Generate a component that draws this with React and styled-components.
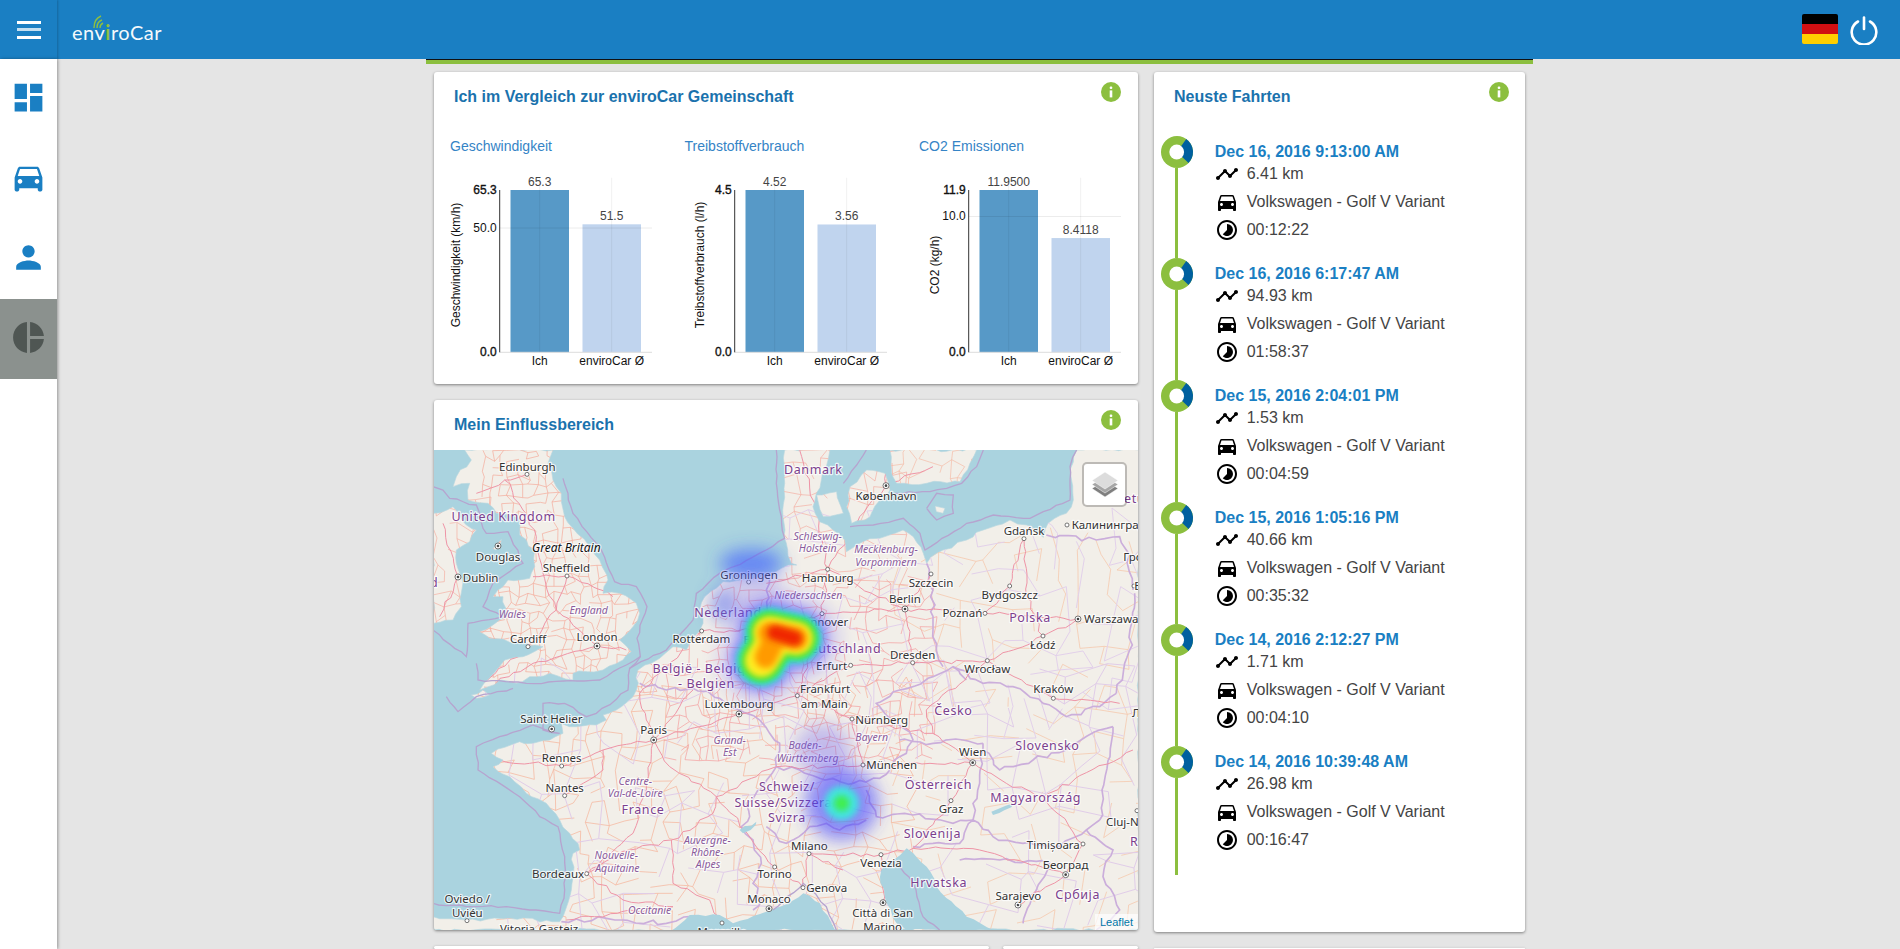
import React from 'react';
import styled, { createGlobalStyle } from 'styled-components';
import { MdDashboard, MdDirectionsCar, MdPerson, MdPieChart, MdTimeline, MdTimelapse } from 'react-icons/md';

const GlobalStyle = createGlobalStyle`
  html, body {
    margin: 0;
    height: 949px;
    overflow: hidden;
    background: #e5e5e5;
    font-family: "Liberation Sans", Arial, sans-serif;
  }
`;

const Page = styled.div`
  display: flex;
  flex-direction: column;
  height: 949px;
  overflow: hidden;
`;

const Header = styled.header`
  display: flex;
  align-items: center;
  height: 59px;
  flex: none;
  background: #1a7fc3;
`;

const BurgerCell = styled.div`
  display: flex;
  flex-direction: column;
  justify-content: center;
  gap: 4.5px;
  width: 57px;
  height: 59px;
  padding: 0 16px 0 17px;
  box-sizing: border-box;
  box-shadow: 1px 0 2px rgba(0, 0, 0, 0.2);
`;

const BurgerBar = styled.span`
  display: block;
  height: 3px;
  background: #fff;
  opacity: ${p => (p.$faded ? 0.75 : 1)};
`;

const Logo = styled.div`
  position: relative;
  margin: 5px 0 0 15px;
  font-family: Lato, sans-serif;
  font-weight: 400;
  font-size: 20px;
  letter-spacing: 0.5px;
  color: #f4f9fc;
`;

const LogoI = styled.span`
  color: #8fbf3f;
  font-weight: 700;
`;

const LogoWaves = styled.svg`
  position: absolute;
  left: 20px;
  top: -5px;
`;

const HeaderRight = styled.div`
  display: flex;
  align-items: center;
  margin-left: auto;
  padding-right: 21px;
  gap: 11px;
`;

const Flag = styled.div`
  width: 36px;
  height: 30px;
  border-radius: 2px;
  margin-top: -1px;
  background: linear-gradient(#000 0 33.3%, #d00f12 33.3% 66.6%, #ffce00 66.6%);
`;

const Body = styled.div`
  display: flex;
  flex: 1;
  min-height: 0;
`;

const Sidebar = styled.nav`
  width: 57px;
  flex: none;
  background: #fff;
  box-shadow: 1px 0 3px rgba(0, 0, 0, 0.35);
  z-index: 1;
`;

const NavItem = styled.div`
  display: flex;
  align-items: center;
  justify-content: center;
  height: 80px;
  padding-bottom: 3px;
  box-sizing: border-box;
  font-size: 37px;
  color: ${p => (p.$active ? '#4f5653' : '#1a7fc3')};
  background: ${p => (p.$active ? '#8b918e' : 'transparent')};
`;

const Main = styled.main`
  flex: 1;
  display: flex;
  justify-content: center;
  min-width: 0;
  padding-left: 2px;
`;

const Container = styled.div`
  width: 1107px;
`;

const Strip = styled.div`
  height: 4px;
  background: #8cbf3f;
  border-top: 1px solid #111;
`;

const Columns = styled.div`
  display: grid;
  grid-template-columns: 704px 371px;
  column-gap: 16px;
  padding: 8px 8px 0 8px;
`;

const Stack = styled.div`
  display: flex;
  flex-direction: column;
  gap: 16px;
`;

const Card = styled.section`
  position: relative;
  background: #fff;
  border-radius: 3px;
  box-shadow: 0 1px 3px rgba(0, 0, 0, 0.45);
  height: ${p => p.$height}px;
  flex: ${p => p.$grow || 'none'};
`;

const CardRow = styled.div`
  display: flex;
  gap: 14px;
`;

const CardTitle = styled.h2`
  margin: 0;
  padding: 2px 0 0 ${p => p.$left || 20}px;
  font-size: 16px;
  font-weight: 700;
  line-height: 46px;
  color: #1a72ad;
`;

const InfoBadge = styled.svg`
  position: absolute;
  top: 10px;
  right: ${p => p.$right}px;
`;

const ChartGrid = styled.div`
  display: grid;
  grid-template-columns: 234.5px 234.5px 1fr;
  padding-left: 16px;
`;

const ChartTitle = styled.div`
  margin-top: 18px;
  font-size: 14px;
  line-height: 16px;
  color: #3584c6;
`;

const ChartSvg = styled.svg`
  display: block;
  margin-top: 16px;
  overflow: visible;
`;

const AxisText = styled.text`
  font-size: 12px;
  fill: ${p => p.$fill || '#111'};
  text-anchor: ${p => p.$anchor || 'middle'};
  stroke: ${p => (p.$bold ? '#111' : 'none')};
  stroke-width: 0.35px;
`;

const MapArea = styled.div`
  position: relative;
  height: 480px;
  margin-top: 2px;
  overflow: hidden;
  background: #aad3df;
  border-radius: 0 0 3px 3px;
`;

const MapSvg = styled.svg`
  display: block;
`;

const LayerButton = styled.div`
  position: absolute;
  top: 12px;
  right: 11px;
  display: flex;
  align-items: center;
  justify-content: center;
  width: 41px;
  height: 41px;
  background: #fff;
  border: 2px solid rgba(0, 0, 0, 0.22);
  border-radius: 5px;
  background-clip: padding-box;
`;

const Attribution = styled.div`
  position: absolute;
  right: 0;
  bottom: 0;
  padding: 0 5px;
  font-size: 11px;
  line-height: 16px;
  color: #0078a8;
  background: rgba(255, 255, 255, 0.7);
`;

const MapText = styled.text`
  font-family: "Noto Sans", "Open Sans", sans-serif;
  text-anchor: ${p => p.$anchor || 'middle'};
  paint-order: stroke;
  stroke: rgba(255, 255, 255, 0.75);
  stroke-width: 2.4px;
  stroke-linejoin: round;
  ${p => ({
    city: 'font-size: 11.5px; fill: #333;',
    country: 'font-size: 12.5px; fill: #7b3f8e; letter-spacing: 0.6px;',
    state: 'font-size: 10.5px; fill: #8a5c9c; font-style: italic;',
    island: 'font-size: 12px; fill: #111; font-style: italic;',
  }[p.$kind])}
`;

const Timeline = styled.div`
  padding: 15.7px 0 0 7px;
`;

const TripItem = styled.div`
  display: flex;
  gap: 21.7px;
  height: 122.1px;
  &:last-child {
    height: 129px;
  }
`;

const MarkerColumn = styled.div`
  display: flex;
  flex-direction: column;
  align-items: center;
  width: 32px;
  flex: none;
`;

const TrackLine = styled.div`
  flex: 1;
  width: 3px;
  margin-right: 1px;
  background: #8cbf3f;
`;

const TripBody = styled.div`
  padding-top: 6.2px;
`;

const TripDate = styled.div`
  font-size: 16px;
  font-weight: 700;
  line-height: 20px;
  color: #1a7fc3;
`;

const TripRow = styled.div`
  display: flex;
  align-items: center;
  gap: 8px;
  height: 24px;
  margin-bottom: 4px;
  font-size: 16px;
  color: #444;
  svg {
    font-size: 24px;
    color: #000;
    flex: none;
  }
`;

// small seeded random so the map comes out the same on every load
function seeded(seed) {
  let s = seed;
  return () => {
    s = (s + 0x6d2b79f5) | 0;
    let t = Math.imul(s ^ (s >>> 15), 1 | s);
    t = (t + Math.imul(t ^ (t >>> 7), 61 | t)) ^ t;
    return ((t ^ (t >>> 14)) >>> 0) / 4294967296;
  };
}

// breaks straight segments into small kinks so lines look like traced geography
function wobble(pts, amount, seed, closed) {
  const rnd = seeded(seed);
  const out = [];
  const n = pts.length / 2;
  const last = closed ? n : n - 1;
  for (let i = 0; i < last; i++) {
    const x0 = pts[i * 2];
    const y0 = pts[i * 2 + 1];
    const x1 = pts[((i + 1) % n) * 2];
    const y1 = pts[((i + 1) % n) * 2 + 1];
    const len = Math.hypot(x1 - x0, y1 - y0);
    const parts = Math.max(1, Math.round(len / 22));
    for (let k = 0; k < parts; k++) {
      const t = k / parts;
      const j = k === 0 ? 0 : amount;
      out.push(
        Math.round(x0 + (x1 - x0) * t + (rnd() - 0.5) * j * 2),
        Math.round(y0 + (y1 - y0) * t + (rnd() - 0.5) * j * 2),
      );
    }
  }
  if (!closed) out.push(pts[n * 2 - 2], pts[n * 2 - 1]);
  return out.join(' ');
}

const parsePts = str => str.split(/[ ,]+/).map(Number);

// map drawing, all shapes in 3x map pixels
const LAND = [
  '0,1400 100,1410 230,1405 380,1415 390,1400 415,1320 420,1210 440,1200 410,1150 380,1110 340,1060 280,1030 230,980 180,950 210,930 175,910 260,875 300,880 350,870 390,850 385,820 430,830 490,825 520,810 510,795 550,780 600,740 610,720 615,660 680,625 720,590 760,600 810,520 800,480 815,440 870,395 950,390 1010,370 1045,355 1091,345 1075,340 1060,280 1050,200 1055,100 1055,0 1191,0 1180,50 1165,90 1150,130 1140,170 1160,215 1200,240 1235,270 1240,305 1290,275 1340,265 1410,240 1441,260 1471,310 1481,340 1511,310 1601,270 1651,240 1731,210 1781,225 1831,262 1845,220 1900,190 1921,150 1911,60 1931,0 2118,0 2118,1440 0,1440',
  '95,0 115,30 70,80 60,110 110,100 105,150 165,160 190,190 260,205 260,255 305,300 305,350 290,385 225,390 180,440 210,440 220,500 140,545 170,565 250,575 330,590 270,620 215,630 140,720 200,690 250,700 290,680 350,670 420,690 420,670 510,660 570,630 595,605 560,570 600,530 620,490 610,460 560,430 510,430 525,390 500,330 470,290 420,235 395,200 385,130 360,90 345,40 360,0',
  '0,190 60,170 100,225 130,240 110,275 70,300 70,340 85,380 85,470 60,510 0,520',
  '180,296 205,268 203,285 188,300',
  '1371,0 1376,70 1391,100 1481,100 1581,95 1611,40 1631,0',
  '1251,110 1301,60 1356,70 1371,120 1341,150 1311,200 1256,220 1241,170',
  '1151,135 1211,125 1231,190 1171,200',
  '1506,168 1536,175 1530,190 1510,185',
  '115,735 150,720 170,735 130,745',
].map((p, i) => wobble(parsePts(p), 5, 100 + i, true));

const SEAS = [
  '720,1440 770,1395 860,1395 900,1420 1000,1385 1041,1370 1111,1330 1161,1360 1206,1440',
  '1341,1280 1345,1260 1381,1230 1421,1195 1441,1210 1481,1250 1511,1310 1601,1400 1681,1440 1421,1440 1391,1420 1361,1360',
  '1675,1085 1741,1060 1735,1072 1680,1095',
  '920,1140 970,1115 968,1125 930,1150',
].map((p, i) => wobble(parsePts(p), 4, 200 + i, true));

const ROADS = [
  [282, 73, 215, 90, 270, 180, 310, 260, 330, 370, 370, 480, 492, 588, 580, 600],
  [215, 90, 130, 130], [370, 480, 285, 590, 150, 700], [492, 588, 300, 640, 150, 720],
  [402, 378, 370, 480], [300, 380, 402, 378, 540, 440], [75, 381, 30, 220], [75, 381, 20, 500],
  [662, 870, 918, 792], [662, 870, 780, 720], [662, 870, 620, 730], [662, 870, 510, 900, 386, 948, 200, 930],
  [510, 900, 510, 960, 395, 1037], [662, 870, 640, 1000, 600, 1150, 461, 1271],
  [662, 870, 710, 950, 850, 1040, 840, 1090, 715, 1170, 720, 1300, 830, 1350, 867, 1419],
  [715, 1170, 590, 1200, 461, 1271, 570, 1350, 720, 1370, 400, 1410],
  [850, 1040, 1025, 1251, 1110, 1313, 1128, 1211, 1344, 1214, 1350, 1358],
  [1128, 1211, 1230, 1260], [918, 792, 1093, 737, 1257, 807, 1290, 945, 1180, 950, 1030, 950, 850, 1040],
  [1093, 737, 1253, 646, 1439, 638, 1663, 632, 1830, 558, 1935, 507, 1656, 490, 1416, 477, 1167, 491, 1184, 358, 1150, 180, 1100, 0],
  [1167, 491, 1093, 737], [1167, 491, 1000, 540, 806, 543, 620, 730], [1416, 477, 1494, 372], [1416, 477, 1439, 638],
  [1184, 358, 1416, 477], [1184, 358, 1000, 400], [1290, 945, 1619, 938, 1554, 1052, 1440, 1195, 1344, 1214],
  [1619, 938, 1720, 1000, 1830, 1040, 1950, 1182, 1898, 1274, 1755, 1365], [1898, 1274, 1640, 1200, 1440, 1195],
  [1830, 1040, 2100, 900], [1619, 938, 1500, 850, 1257, 807], [1500, 850, 1480, 780, 1663, 632],
  [1861, 745, 1663, 632], [1861, 745, 2060, 760], [1773, 266, 1780, 440, 1830, 558], [1656, 490, 1730, 408, 1773, 266],
  [1359, 107, 1280, 200, 1184, 358], [1359, 107, 1500, 50], [1359, 107, 1370, 0],
].map((r, i) => wobble(r, 6, 300 + i));

const BORDERS = [
  [620, 700, 700, 720, 780, 715, 860, 745, 920, 780, 980, 810, 1010, 850, 1040, 880, 1030, 950, 990, 1010, 940, 1060, 950, 1100, 925, 1130, 960, 1170, 985, 1240, 960, 1300, 985, 1350, 960, 1380],
  [1010, 370, 1000, 420, 1010, 500, 960, 530, 945, 620, 900, 660],
  [1030, 950, 1100, 960, 1160, 985, 1260, 1000, 1340, 985, 1400, 920, 1440, 870, 1390, 820, 1330, 760, 1400, 720, 1500, 680, 1560, 650, 1600, 690],
  [1481, 340, 1500, 420, 1500, 520, 1510, 600, 1530, 650], [1560, 650, 1650, 700, 1740, 710, 1830, 760],
  [1830, 760, 1900, 800, 2000, 770, 2050, 730], [1840, 255, 1990, 270, 2060, 260, 2080, 300, 2100, 420],
  [1400, 870, 1500, 880, 1590, 870, 1650, 880], [1650, 900, 1700, 960, 1800, 930, 1900, 900, 2000, 840, 2040, 830],
  [1650, 880, 1650, 900, 1640, 1000, 1620, 1060, 1620, 1110], [1300, 1020, 1330, 1100, 1440, 1095, 1560, 1120, 1620, 1110],
  [1000, 1130, 1060, 1180, 1130, 1130, 1180, 1120, 1220, 1140, 1300, 1110],
  [1440, 1190, 1500, 1180, 1580, 1180, 1620, 1110, 1680, 1160, 1770, 1180, 1850, 1190],
  [1580, 1230, 1700, 1230, 1850, 1240, 1810, 1320, 1770, 1420], [2000, 1110, 1960, 1140, 1880, 1190, 1850, 1190],
  [1960, 1140, 2040, 1200, 2010, 1280, 2060, 1380, 1990, 1440], [385, 1415, 520, 1405, 700, 1420, 770, 1400],
  [2040, 830, 2000, 1110], [2050, 730, 2090, 600, 2105, 430],
].map((b, i) => wobble(b, 7, 500 + i));

const SEA_BORDERS = [
  [390, 85, 420, 190, 505, 300, 545, 395, 610, 410, 642, 470, 612, 565, 622, 620, 590, 655, 585, 720, 490, 790, 460, 800, 395, 760, 330, 760, 330, 840, 380, 850, 300, 825, 200, 860, 130, 890, 135, 960, 260, 1040, 320, 1100, 375, 1130, 395, 1220, 395, 1320, 380, 1390, 220, 1370, 100, 1370, 0, 1360],
  [622, 620, 500, 690, 280, 700, 135, 690, 130, 640],
  [40, 740, 75, 785, 130, 740, 240, 715],
  [0, 110, 30, 120, 50, 145, 130, 165, 150, 235, 160, 250, 225, 245, 270, 340, 230, 365, 180, 400, 150, 470, 210, 500, 105, 520, 100, 620, 0, 540],
  [590, 655, 700, 600, 780, 510, 790, 430, 860, 370, 1000, 300, 1055, 265, 1040, 180, 1030, 100, 1030, 0],
  [1251, 230, 1321, 225, 1411, 205, 1461, 250, 1476, 300, 1601, 220, 1681, 195, 1791, 205, 1831, 185, 1911, 150, 1911, 50, 1931, 0],
  [1231, 100, 1281, 30, 1300, 0], [1386, 130, 1491, 125, 1586, 100, 1631, 50, 1651, 0],
  [1481, 175, 1511, 130, 1561, 135, 1561, 190, 1511, 210, 1481, 175],
  [1400, 1250, 1440, 1300, 1470, 1400, 1520, 1440], [1020, 1380, 1111, 1300, 1180, 1370, 1210, 1440],
];

function mesh(x0, y0, x1, y1, step, keep, seed) {
  const rnd = seeded(seed);
  const nx = Math.ceil((x1 - x0) / step);
  const ny = Math.ceil((y1 - y0) / step);
  const pts = [];
  for (let j = 0; j <= ny; j++) {
    const row = [];
    for (let i = 0; i <= nx; i++) {
      row.push([x0 + i * step + (rnd() - 0.5) * step * 0.85, y0 + j * step + (rnd() - 0.5) * step * 0.85]);
    }
    pts.push(row);
  }
  const seg = (a, b) => `M${a[0].toFixed(0)},${a[1].toFixed(0)}L${b[0].toFixed(0)},${b[1].toFixed(0)}`;
  let d = '';
  for (let j = 0; j <= ny; j++) {
    for (let i = 0; i <= nx; i++) {
      if (i < nx && rnd() < keep) d += seg(pts[j][i], pts[j][i + 1]);
      if (j < ny && rnd() < keep) d += seg(pts[j][i], pts[j + 1][i]);
    }
  }
  return d;
}

const MESHES = [
  { d: mesh(150, 0, 640, 720, 27, 0.72, 11), color: '#f4a897', w: 2 },
  { d: mesh(0, 150, 140, 520, 40, 0.65, 5), color: '#f4ada0', w: 2 },
  { d: mesh(150, 700, 1400, 1440, 46, 0.56, 21), color: '#f5b59c', w: 2.2 },
  { d: mesh(700, 380, 1500, 900, 32, 0.62, 31), color: '#f4a2a2', w: 2.2 },
  { d: mesh(1050, 0, 1400, 400, 40, 0.55, 41), color: '#f4aca0', w: 2 },
  { d: mesh(1400, 250, 2118, 1440, 68, 0.42, 51), color: '#f6c6a8', w: 2.2 },
  { d: mesh(1360, 0, 1640, 100, 38, 0.5, 61), color: '#f5b9a5', w: 2 },
  { d: mesh(150, 650, 2118, 1440, 88, 0.5, 71), color: '#e0cce8', w: 3 },
  { d: mesh(1000, 200, 2118, 800, 80, 0.5, 81), color: '#e2d0ea', w: 3 },
];

const CITY_DOTS = [
  [282, 73], [195, 288, 1], [75, 381, 1], [402, 378], [285, 590], [492, 588, 1], [806, 543], [947, 396], [1184, 358],
  [1167, 491], [1416, 477, 1], [1494, 372], [1359, 107, 1], [1773, 266], [1902, 225], [1730, 408], [1656, 490],
  [1935, 507, 1], [1830, 558], [1439, 638], [1663, 632], [1253, 646], [1093, 737], [918, 792, 1], [356, 837, 1],
  [662, 870, 1], [386, 948], [395, 1037], [461, 1271], [102, 1412], [1025, 1251], [1008, 1376, 1], [867, 1419],
  [1257, 807], [1290, 945], [1619, 938, 1], [1554, 1052], [1128, 1211], [1344, 1214], [1110, 1313], [1350, 1358, 1],
  [1755, 1365, 1], [1898, 1274, 1], [1950, 1182], [2112, 1082], [1861, 745], [2103, 408],
];

const LABELS = [
  ['city', 'Edinburgh', 283, 52], ['city', 'Douglas', 195, 322], ['city', 'Dublin', 143, 383], ['city', 'Sheffield', 400, 355],
  ['city', 'Cardiff', 285, 568], ['city', 'London', 492, 560], ['city', 'Rotterdam', 805, 568], ['city', 'Groningen', 948, 374],
  ['city', 'Essen', 978, 570], ['city', 'Hamburg', 1184, 385], ['city', 'Hannover', 1166, 515], ['city', 'Berlin', 1416, 447],
  ['city', 'Szczecin', 1494, 398], ['city', 'København', 1359, 138], ['city', 'Gdańsk', 1773, 243], ['city', 'Калининград', 1916, 226, 'start'],
  ['city', 'Гродно', 2071, 320, 'start'], ['city', 'Bydgoszcz', 1730, 435], ['city', 'Poznań', 1588, 490], ['city', 'Warszawa', 1953, 508, 'start'],
  ['city', 'Białystok', 2104, 408, 'start'], ['city', 'Łódź', 1829, 586], ['city', 'Dresden', 1439, 615], ['city', 'Wrocław', 1663, 657],
  ['city', 'Erfurt', 1196, 647], ['city', 'Frankfurt', 1176, 716], ['city', 'am Main', 1174, 762], ['city', 'Kraków', 1861, 716],
  ['city', 'Luxembourg', 918, 762], ['city', 'Saint Helier', 355, 807], ['city', 'Paris', 662, 841], ['city', 'Rennes', 386, 924],
  ['city', 'Nantes', 395, 1015], ['city', 'Bordeaux', 375, 1273], ['city', 'Oviedo /', 103, 1347], ['city', 'Uviéu', 103, 1390],
  ['city', 'Vitoria-Gasteiz', 318, 1438], ['city', 'Torino', 1025, 1273], ['city', 'Monaco', 1008, 1348], ['city', 'Marseille', 867, 1445],
  ['city', 'Nürnberg', 1346, 810], ['city', 'München', 1376, 945], ['city', 'Wien', 1619, 907], ['city', 'Graz', 1554, 1078],
  ['city', 'Milano', 1129, 1187], ['city', 'Venezia', 1344, 1238], ['city', 'Genova', 1181, 1315], ['city', 'Città di San', 1349, 1390],
  ['city', 'Marino', 1349, 1432], ['city', 'Sarajevo', 1756, 1337], ['city', 'Београд', 1898, 1245], ['city', 'Timișoara', 1861, 1185],
  ['city', 'Cluj-Napoca', 2019, 1115, 'start'], ['city', 'Львів', 2097, 790, 'start'],
  ['country', 'United Kingdom', 212, 200], ['country', 'Danmark', 1141, 60], ['country', 'Nederland', 885, 490],
  ['country', 'België - Belgique', 822, 658], ['country', '- Belgien', 820, 703], ['country', 'Deutschland', 1224, 597],
  ['country', 'Polska', 1791, 505], ['country', 'Česko', 1561, 782], ['country', 'Slovensko', 1843, 888], ['country', 'Österreich', 1516, 1004],
  ['country', 'Magyarország', 1808, 1045], ['country', 'Slovenija', 1498, 1153], ['country', 'Hrvatska', 1517, 1298], ['country', 'Србија', 1934, 1334],
  ['country', 'France', 630, 1081], ['country', 'Schweiz/', 1062, 1012], ['country', 'Suisse/Svizzera/', 1059, 1058], ['country', 'Svizra', 1062, 1104],
  ['country', 'România', 2091, 1175, 'start'], ['country', 'Lietuva', 2040, 148, 'start'], ['country', 'Ireland', 16, 398, 'end'],
  ['state', 'Wales', 238, 493], ['state', 'England', 467, 481], ['island', 'Great Britain', 400, 293],
  ['state', 'Schleswig-', 1154, 258], ['state', 'Holstein', 1154, 293], ['state', 'Mecklenburg-', 1359, 298], ['state', 'Vorpommern', 1359, 335],
  ['state', 'Niedersachsen', 1126, 436], ['state', 'Grand-', 890, 870], ['state', 'Est', 890, 907], ['state', 'Baden-', 1116, 885],
  ['state', 'Württemberg', 1124, 923], ['state', 'Bayern', 1316, 860], ['state', 'Centre-', 607, 992], ['state', 'Val-de-Loire', 607, 1030],
  ['state', 'Nouvelle-', 550, 1216], ['state', 'Aquitaine', 553, 1253], ['state', 'Auvergne-', 823, 1171], ['state', 'Rhône-', 823, 1207],
  ['state', 'Alpes', 825, 1243], ['state', 'Occitanie', 650, 1380],
];

const heatSpine = 'M1010,548 L1090,565 M1030,560 L985,632';

const BlurFilter = ({ id, amount }) => (
  <filter id={id} filterUnits="userSpaceOnUse" x="0" y="0" width="2118" height="1440">
    <feGaussianBlur stdDeviation={amount} />
  </filter>
);

const HeatMap = () => (
  <g>
    <g filter="url(#blur30)">
      <ellipse cx="955" cy="340" rx="95" ry="42" fill="#3f5cff" opacity="0.65" />
      <ellipse cx="870" cy="465" rx="38" ry="50" fill="#4a6cf0" opacity="0.5" />
      <ellipse cx="950" cy="440" rx="110" ry="70" fill="#7a6cf0" opacity="0.2" />
      <ellipse cx="1170" cy="900" rx="85" ry="80" fill="#6a5cf0" opacity="0.35" />
      <circle cx="1226" cy="1060" r="110" fill="#4646ff" opacity="0.6" />
    </g>
    <path d={heatSpine} stroke="#6a5cff" strokeWidth="262" strokeLinecap="round" fill="none" opacity="0.22" filter="url(#blur30)" />
    <path d={heatSpine} stroke="#3f3fff" strokeWidth="186" strokeLinecap="round" fill="none" opacity="0.5" filter="url(#blur18)" />
    <path d={heatSpine} stroke="#2fe6e6" strokeWidth="150" strokeLinecap="round" fill="none" filter="url(#blur8)" />
    <path d={heatSpine} stroke="#35e035" strokeWidth="130" strokeLinecap="round" fill="none" filter="url(#blur8)" />
    <path d={heatSpine} stroke="#ffee20" strokeWidth="102" strokeLinecap="round" fill="none" filter="url(#blur8)" />
    <path d="M1008,550 L1090,565 M1018,580 L998,622" stroke="#ff9a00" strokeWidth="66" strokeLinecap="round" fill="none" filter="url(#blur8)" />
    <path d="M1025,548 L1085,565" stroke="#f02800" strokeWidth="46" strokeLinecap="round" fill="none" filter="url(#blur8)" />
    <circle cx="1226" cy="1060" r="52" fill="#40e8e0" opacity="0.95" filter="url(#blur8)" />
    <circle cx="1226" cy="1060" r="24" fill="#40ee50" filter="url(#blur8)" />
  </g>
);

const EuropeMap = () => (
  <MapSvg width="704" height="480" viewBox="1 0 704 480">
    <defs>
      <clipPath id="landClip">
        {LAND.map(p => (
          <polygon key={p} points={p} transform="scale(0.33333)" />
        ))}
      </clipPath>
      <BlurFilter id="blur8" amount="9" />
      <BlurFilter id="blur18" amount="16" />
      <BlurFilter id="blur30" amount="26" />
    </defs>
    <rect width="706" height="480" fill="#aad3df" />
    <g transform="scale(0.33333)">
      {LAND.map(p => (
        <polygon key={p} points={p} fill="#f2efe9" stroke="#b9d8e0" strokeWidth="2" />
      ))}
    </g>
    <g clipPath="url(#landClip)">
      <g transform="scale(0.33333)" fill="none">
        {MESHES.map(m => (
          <path key={m.d.slice(0, 30)} d={m.d} stroke={m.color} strokeWidth={m.w} />
        ))}
        {BORDERS.map(b => (
          <polyline key={b} points={b} stroke="#cbaedb" strokeWidth="5" />
        ))}
        {ROADS.map(r => (
          <polyline key={r} points={r} stroke="#ee94a6" strokeWidth="3" />
        ))}
      </g>
    </g>
    <g transform="scale(0.33333)">
      {SEAS.map(p => (
        <polygon key={p} points={p} fill="#aad3df" />
      ))}
      {SEA_BORDERS.map(b => (
        <polyline key={b.join()} points={wobble(b, 3, b[0] + b[1])} fill="none" stroke="#b6a4cf" strokeWidth="4" />
      ))}
      {CITY_DOTS.map(([x, y, capital]) => (
        <g key={`${x}-${y}`}>
          <circle cx={x} cy={y} r={capital ? 9 : 6} fill="#fff" stroke="#555" strokeWidth="2.4" />
          {capital && <circle cx={x} cy={y} r="4" fill="#444" />}
        </g>
      ))}
    </g>
    {LABELS.map(([kind, text, x, y, anchor]) => (
      <MapText key={text} $kind={kind} $anchor={anchor} x={x / 3} y={y / 3 + 4}>
        {text}
      </MapText>
    ))}
    <g transform="scale(0.33333)">
      <HeatMap />
    </g>
  </MapSvg>
);

const CHARTS = [
  {
    title: 'Geschwindigkeit',
    axis: 'Geschwindigkeit (km/h)',
    labelX: 10,
    me: 65.3,
    avg: 51.5,
    meText: '65.3',
    avgText: '51.5',
    topTick: '65.3',
    tick: 50,
  },
  {
    title: 'Treibstoffverbrauch',
    axis: 'Treibstoffverbrauch (l/h)',
    labelX: 19,
    me: 4.52,
    avg: 3.56,
    meText: '4.52',
    avgText: '3.56',
    topTick: '4.5',
  },
  {
    title: 'CO2 Emissionen',
    axis: 'CO2 (kg/h)',
    labelX: 20,
    me: 11.95,
    avg: 8.4118,
    meText: '11.9500',
    avgText: '8.4118',
    topTick: '11.9',
    tick: 10,
  },
];

const AXIS_X = 49.7;
const TOP = 20;
const BOTTOM = 182.3;

const BarChart = ({ chart }) => {
  const yOf = v => BOTTOM - (v / chart.me) * (BOTTOM - TOP);
  return (
    <div>
      <ChartTitle>{chart.title}</ChartTitle>
      <ChartSvg width="210" height="205">
        <rect x="60.5" y={TOP} width="58.5" height={BOTTOM - TOP} fill="#5799c7" />
        <rect x="132.5" y={yOf(chart.avg)} width="58.5" height={BOTTOM - yOf(chart.avg)} fill="#c0d4ee" />
        {chart.tick && <line x1={AXIS_X} x2="202" y1={yOf(chart.tick)} y2={yOf(chart.tick)} stroke="rgba(0,0,0,0.08)" />}
        <line x1="89.7" x2="89.7" y1="7.7" y2={BOTTOM} stroke="rgba(0,0,0,0.06)" />
        <line x1="161.7" x2="161.7" y1="7.7" y2={BOTTOM} stroke="rgba(0,0,0,0.06)" />
        <line x1={AXIS_X} x2="202" y1={BOTTOM} y2={BOTTOM} stroke="#ddd" />
        <line x1={AXIS_X} x2={AXIS_X} y1={TOP} y2={BOTTOM} stroke="#333" />
        <AxisText $bold $anchor="end" x={AXIS_X - 3} y={TOP + 4}>{chart.topTick}</AxisText>
        {chart.tick && (
          <AxisText $anchor="end" x={AXIS_X - 3} y={yOf(chart.tick) + 4}>{chart.tick.toFixed(1)}</AxisText>
        )}
        <AxisText $bold $anchor="end" x={AXIS_X - 3} y={BOTTOM + 4}>0.0</AxisText>
        <AxisText x="89.7" y={BOTTOM + 13}>Ich</AxisText>
        <AxisText x="161.7" y={BOTTOM + 13}>enviroCar Ø</AxisText>
        <AxisText $fill="#444" x="89.7" y={TOP - 4}>{chart.meText}</AxisText>
        <AxisText $fill="#444" x="161.7" y={yOf(chart.avg) - 4}>{chart.avgText}</AxisText>
        <AxisText transform={`translate(${chart.labelX},95) rotate(-90)`}>{chart.axis}</AxisText>
      </ChartSvg>
    </div>
  );
};

const Info = ({ right }) => (
  <InfoBadge $right={right} width="20" height="20" viewBox="0 0 20 20">
    <circle cx="10" cy="10" r="10" fill="#8cbf3f" />
    <rect x="8.7" y="4.5" width="2.6" height="2.6" rx="1" fill="#fff" />
    <rect x="8.7" y="8.4" width="2.6" height="7" fill="#fff" />
  </InfoBadge>
);

const TripMarker = () => (
  <svg width="32" height="32" viewBox="0 0 32 32" style={{ flex: 'none' }}>
    <circle cx="16" cy="16" r="16" fill="#8cbf3f" />
    <path d="M25.2 2.9 A16 16 0 0 1 27.5 27.1 L16 16 Z" fill="#00609f" />
    <circle cx="15.7" cy="16" r="7.4" fill="#fff" />
  </svg>
);

const TRIPS = [
  ['Dec 16, 2016 9:13:00 AM', '6.41 km', '00:12:22'],
  ['Dec 16, 2016 6:17:47 AM', '94.93 km', '01:58:37'],
  ['Dec 15, 2016 2:04:01 PM', '1.53 km', '00:04:59'],
  ['Dec 15, 2016 1:05:16 PM', '40.66 km', '00:35:32'],
  ['Dec 14, 2016 2:12:27 PM', '1.71 km', '00:04:10'],
  ['Dec 14, 2016 10:39:48 AM', '26.98 km', '00:16:47'],
];

export default function App() {
  return (
    <Page>
      <GlobalStyle />
      <Header>
        <BurgerCell>
          <BurgerBar />
          <BurgerBar $faded />
          <BurgerBar />
        </BurgerCell>
        <Logo>
          <LogoWaves width="14" height="14" viewBox="0 0 14 14" fill="none" stroke="#8fbf3f" strokeWidth="1.4">
            <path d="M2 13 C2 8 4 3 9 1" />
            <path d="M5 13 C5 9 7 6 10 5" />
            <path d="M8 13 C8 11 9 9 11 8" />
          </LogoWaves>
          env<LogoI>i</LogoI>roCar
        </Logo>
        <HeaderRight>
          <Flag />
          <svg width="30" height="30" viewBox="0 0 30 30" fill="none" stroke="#fff" strokeWidth="2.6" strokeLinecap="round">
            <path d="M9 6.5 A12.3 12.3 0 1 0 21 6.5" />
            <path d="M15 2.5 V14" />
          </svg>
        </HeaderRight>
      </Header>
      <Body>
        <Sidebar>
          <NavItem><MdDashboard /></NavItem>
          <NavItem><MdDirectionsCar /></NavItem>
          <NavItem><MdPerson /></NavItem>
          <NavItem $active><MdPieChart /></NavItem>
        </Sidebar>
        <Main>
          <Container>
            <Strip />
            <Columns>
              <Stack>
                <Card $height={312}>
                  <CardTitle>Ich im Vergleich zur enviroCar Gemeinschaft</CardTitle>
                  <Info right={17} />
                  <ChartGrid>
                    {CHARTS.map(c => (
                      <BarChart key={c.title} chart={c} />
                    ))}
                  </ChartGrid>
                </Card>
                <Card $height={530}>
                  <CardTitle>Mein Einflussbereich</CardTitle>
                  <Info right={17} />
                  <MapArea>
                    <EuropeMap />
                    <LayerButton>
                      <svg width="26" height="25" viewBox="0 0 26 25">
                        <path d="M13 8 L26 16.5 L13 25 L0 16.5 Z" fill="#7f7f7f" stroke="#fff" strokeWidth="0.5" />
                        <path d="M13 4 L26 12.5 L13 21 L0 12.5 Z" fill="#a6a6a6" stroke="#fff" strokeWidth="0.5" />
                        <path d="M13 0 L26 8.5 L13 17 L0 8.5 Z" fill="#dcdcdc" stroke="#fff" strokeWidth="0.5" />
                      </svg>
                    </LayerButton>
                    <Attribution>Leaflet</Attribution>
                  </MapArea>
                </Card>
                <CardRow>
                  <Card $height={3} $grow="0 0 555px" />
                  <Card $height={3} $grow="1" />
                </CardRow>
              </Stack>
              <Stack>
                <Card $height={860}>
                  <CardTitle>Neuste Fahrten</CardTitle>
                  <Info right={16} />
                  <Timeline>
                    {TRIPS.map(([date, km, time]) => (
                      <TripItem key={date}>
                        <MarkerColumn>
                          <TripMarker />
                          <TrackLine />
                        </MarkerColumn>
                        <TripBody>
                          <TripDate>{date}</TripDate>
                          <TripRow><MdTimeline />{km}</TripRow>
                          <TripRow><MdDirectionsCar />Volkswagen - Golf V Variant</TripRow>
                          <TripRow><MdTimelapse />{time}</TripRow>
                        </TripBody>
                      </TripItem>
                    ))}
                  </Timeline>
                </Card>
                <Card $height={1} />
              </Stack>
            </Columns>
          </Container>
        </Main>
      </Body>
    </Page>
  );
}
